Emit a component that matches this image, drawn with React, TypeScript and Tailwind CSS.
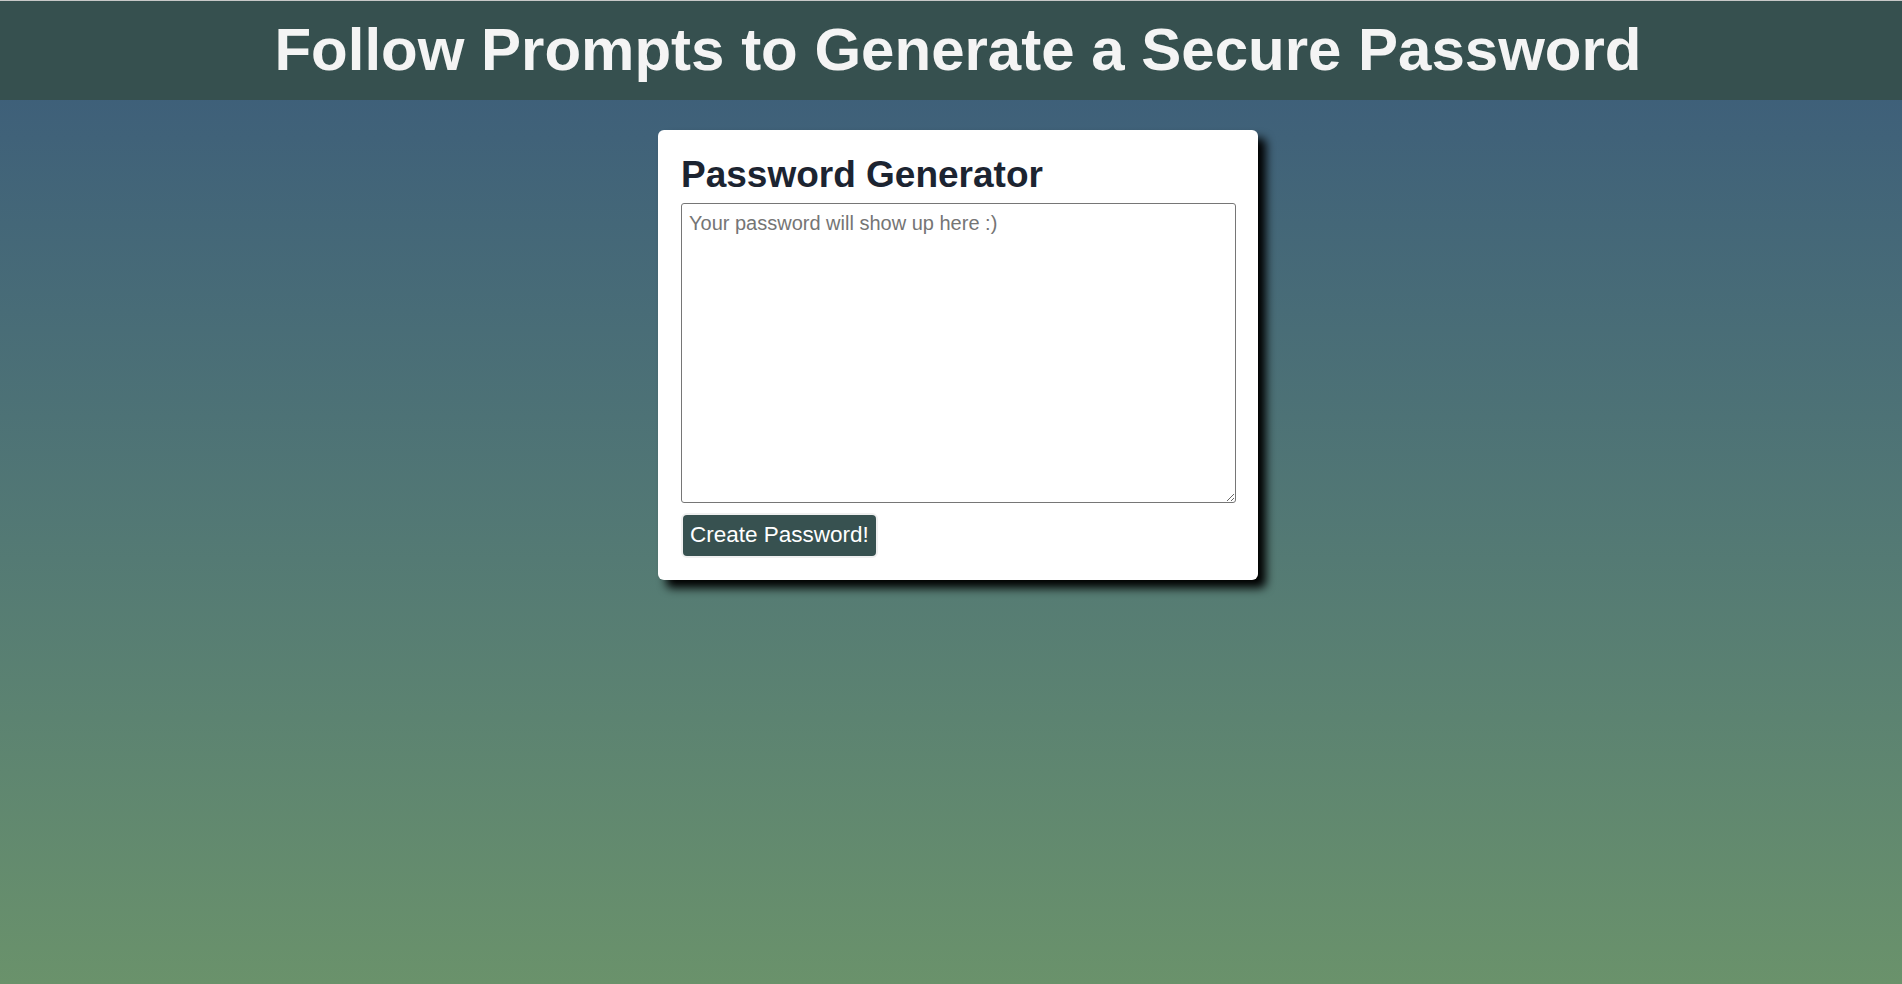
import React from "react";

export default function App() {
  return (
    <div
      className="h-[984px] w-full overflow-hidden flex flex-col bg-gradient-to-b from-[#3a5a7a] to-[#6a926b]"
      style={{ fontFamily: '"Liberation Sans", Arial, sans-serif' }}
    >
      <header className="h-[100px] shrink-0 bg-[#36504f] border-t border-[#c8c8c8] flex items-center justify-center pl-[14px]">
        <h1 className="text-[60px] leading-none font-bold text-[#f4f4f4] -mt-[2px]">
          Follow Prompts to Generate a Secure Password
        </h1>
      </header>
      <main className="flex justify-center pt-[30px] pl-[14px]">
        <div className="w-[600px] h-[450px] bg-white rounded-[6px] shadow-[8px_8px_10px_rgba(0,0,0,1)] px-[23px] pt-[24px] flex flex-col">
          <h2 className="text-[37px] leading-[42px] font-bold text-[#1c2431]">Password Generator</h2>
          <textarea
            readOnly
            placeholder="Your password will show up here :)"
            className="mt-[7px] w-[555px] h-[300px] border border-[#767676] rounded-[3px] px-[7px] pt-[7px] pb-[4px] text-[20px] leading-[24px] text-black placeholder:text-[#757575] resize-y outline-none"
          />
          <div className="mt-[12px] ml-[2px]">
            <button className="h-[41px] px-[7px] bg-[#375150] text-white text-[22.5px] leading-none rounded-[4px] ring-2 ring-[#f0f0f0]">
              Create Password!
            </button>
          </div>
        </div>
      </main>
    </div>
  );
}
